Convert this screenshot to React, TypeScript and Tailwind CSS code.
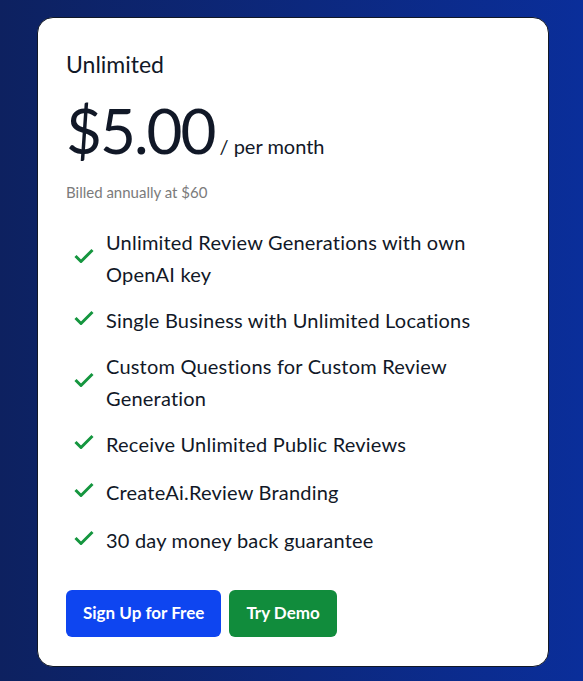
const features = [
    "Unlimited Review Generations with own OpenAI key",
    "Single Business with Unlimited Locations",
    "Custom Questions for Custom Review Generation",
    "Receive Unlimited Public Reviews",
    "CreateAi.Review Branding",
    "30 day money back guarantee",
];

function CheckMark() {
    return (
        <svg viewBox="0 0 20 16" className="mb-[3px] ml-[8px] h-[16px] w-[20px] shrink-0" fill="none">
            <path d="M1.5 8 L7 13.5 L18.5 2" stroke="#15963f" strokeWidth={3} strokeLinejoin="round" />
        </svg>
    );
}

export default function App() {
    return (
        <div
            className="min-h-[681px] w-full bg-gradient-to-r from-[#0d2160] to-[#0a2e9a] pl-[37px] pt-[17px]"
            style={{ fontFamily: "Lato, 'Noto Sans', sans-serif" }}
        >
            <div className="w-[512px] rounded-2xl border border-[#111827] bg-white px-[28px] pt-[30px] pb-[29px] text-[#111827]">
                <h3 className="text-[23px] leading-8">Unlimited</h3>

                <div className="mt-[14px] flex items-baseline">
                    <span className="text-[62px] leading-[72px] tracking-[-2px]">$5.00</span>
                    <span className="ml-[5px] text-[20px]">/ per month</span>
                </div>

                <p className="mt-[15px] text-[15px] text-[#7b7b7b]">Billed annually at $60</p>

                <ul className="mt-[22px] flex w-[420px] flex-col gap-[12px]">
                    {features.map((f) => (
                        <li key={f} className="flex min-h-[36px] items-center">
                            <CheckMark />
                            <span className="ml-[12px] w-[370px] text-[20px] leading-8 tracking-[0.2px]">{f}</span>
                        </li>
                    ))}
                </ul>

                <div className="mt-[32px] flex gap-2">
                    <button className="h-[47px] rounded-md bg-[#0e45f0] px-[17px] text-[17px] font-bold text-white">
                        Sign Up for Free
                    </button>
                    <button className="h-[47px] rounded-md bg-[#118c3c] px-[17px] text-[17px] font-bold text-white">
                        Try Demo
                    </button>
                </div>
            </div>
        </div>
    );
}
